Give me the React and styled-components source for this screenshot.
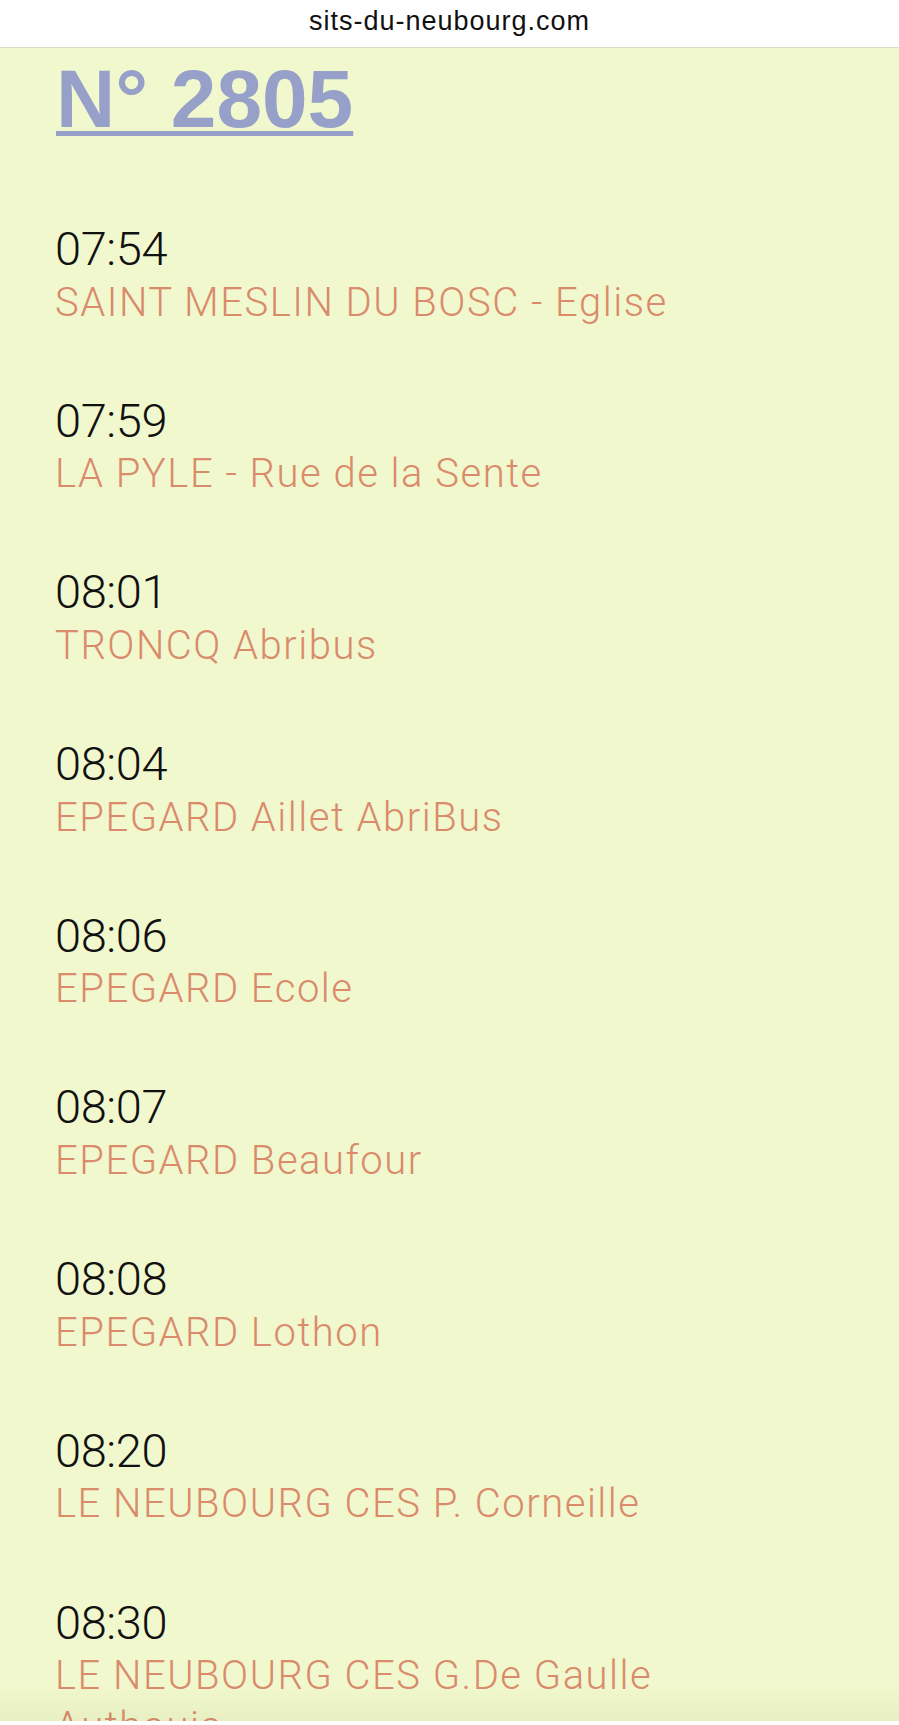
import React from "react";
import styled, {createGlobalStyle} from "styled-components";

const stops = [
    {time: "07:54", name: "SAINT MESLIN DU BOSC - Eglise"},
    {time: "07:59", name: "LA PYLE - Rue de la Sente"},
    {time: "08:01", name: "TRONCQ Abribus"},
    {time: "08:04", name: "EPEGARD Aillet AbriBus"},
    {time: "08:06", name: "EPEGARD Ecole"},
    {time: "08:07", name: "EPEGARD Beaufour"},
    {time: "08:08", name: "EPEGARD Lothon"},
    {time: "08:20", name: "LE NEUBOURG CES P. Corneille"},
    {time: "08:30", name: "LE NEUBOURG CES G.De Gaulle Authouis"},
];

function App() {
    return (
        <Page>
            <GlobalStyle/>
            <AddressBar>sits-du-neubourg.com</AddressBar>
            <Content>
                <Title>N° 2805</Title>
                <StopList>
                    {stops.map((s) => (
                        <Stop key={s.time}>
                            <Time>{s.time}</Time>
                            <StopName>{s.name}</StopName>
                        </Stop>
                    ))}
                </StopList>
            </Content>
            <BottomShade/>
            <BottomEdge/>
        </Page>
    );
}

export default App;

// styles
const GlobalStyle = createGlobalStyle`
    html, body {
        margin: 0;
        padding: 0;
        background: #f1f8cd;
    }
`;
const Page = styled.div`
    height: 100vh;
    overflow: hidden;
    background: #f1f8cd;
`;
const AddressBar = styled.div`
    height: 48px;
    background: #fff;
    border-bottom: 1px solid #d9ddc6;
    display: flex;
    justify-content: center;
    align-items: center;
    padding-bottom: 5px;
    box-sizing: border-box;
    font-family: "Liberation Sans", Arial, sans-serif;
    font-size: 27px;
    letter-spacing: 1px;
    color: #111;
`;
const Content = styled.div`
    padding: 10px 60px 0 55px;
`;
const Title = styled.h1`
    margin: 0 0 0 1px;
    font-family: "Liberation Sans", Arial, sans-serif;
    font-weight: 700;
    font-size: 82px;
    line-height: 82px;
    color: #96a0c9;
    text-decoration: underline;
    text-decoration-thickness: 5px;
    text-underline-offset: 4px;
`;
const StopList = styled.div`
    display: flex;
    flex-direction: column;
    gap: 66.2px;
    margin-top: 82px;
`;
const Stop = styled.div`
    display: flex;
    flex-direction: column;
    max-width: 700px;
`;
const Time = styled.div`
    font-family: Roboto, sans-serif;
    font-weight: 300;
    font-size: 47px;
    line-height: 54.5px;
    letter-spacing: -0.4px;
    color: #111;
`;
const StopName = styled.div`
    font-family: Roboto, sans-serif;
    font-weight: 300;
    font-size: 40px;
    line-height: 51px;
    letter-spacing: 1.5px;
    color: #d98b6c;
`;
const BottomShade = styled.div`
    position: fixed;
    left: 0;
    right: 0;
    bottom: 4px;
    height: 36px;
    background: linear-gradient(rgba(120, 130, 60, 0), rgba(120, 130, 60, 0.07));
    pointer-events: none;
`;
const BottomEdge = styled.div`
    position: fixed;
    left: 0;
    right: 0;
    bottom: 0;
    height: 4px;
    background: #fff;
`;
